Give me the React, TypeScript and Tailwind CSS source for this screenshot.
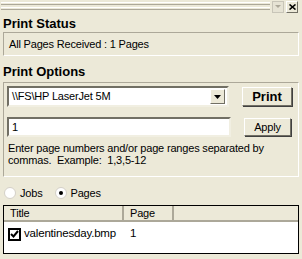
export default function App() {
  return (
    <div className="w-[302px] h-[259px] overflow-hidden bg-[#ece9d8] text-[11px] tracking-[-0.18px] text-black font-['Liberation_Sans',Arial,sans-serif] leading-none">
      {/* title / gripper bar */}
      <div className="flex items-start h-[14px] pl-[1px] pr-[4px] pt-[1px]">
        <div className="flex-1 flex flex-col gap-[2px] pt-[1px] pr-[2px]">
          <div className="h-[3px] border-t border-b border-t-white border-b-[#aca899]" />
          <div className="h-[3px] border-t border-b border-t-white border-b-[#aca899]" />
        </div>
        <div className="w-[12px] h-[12px] mr-[2px] flex items-center justify-center border border-[#c8c5b8] bg-[#e6e3d4]">
          <svg width="6" height="4" viewBox="0 0 6 4"><path d="M0 0h6L3 3z" fill="#aca899" /></svg>
        </div>
        <div className="w-[12px] h-[12px] flex items-center justify-center border border-t-white border-l-white border-r-[#716f64] border-b-[#716f64] bg-[#ece9d8]">
          <svg width="7" height="6" viewBox="0 0 7 6"><path d="M0.5 0.5l6 5M6.5 0.5l-6 5" stroke="#000" strokeWidth="1.6" /></svg>
        </div>
      </div>

      <div className="px-[3px] pt-[3px] h-[18px] text-[13px] tracking-normal font-bold">Print Status</div>
      <div className="mx-[3px] h-[24px] flex items-center px-[5px] border border-t-[#aca899] border-l-[#aca899] border-b-white border-r-white">
        All Pages Received : 1 Pages
      </div>

      <div className="px-[3px] pt-[9px] h-[26px] text-[13px] tracking-normal font-bold">Print Options</div>
      <div className="mx-[3px] h-[95px] border border-t-[#aca899] border-l-[#aca899] border-b-white border-r-white px-[3px] pt-[3px]">
        <div className="flex items-center h-[21px]">
          <div className="w-[222px] h-[21px] flex items-center bg-white border-2 border-t-[#716f64] border-l-[#716f64] border-b-[#f1efe2] border-r-[#f1efe2]">
            <span className="flex-1 pl-[3px]">\\FS\HP LaserJet 5M</span>
            <div className="w-[15px] h-[15px] mr-[2px] flex items-center justify-center bg-[#ece9d8] border border-t-white border-l-white border-r-[#716f64] border-b-[#716f64]">
              <svg width="7" height="4" viewBox="0 0 7 4"><path d="M0 0h7L3.5 4z" fill="#000" /></svg>
            </div>
          </div>
          <button className="ml-[13px] w-[50px] h-[19px] text-[13px] tracking-normal font-bold bg-[#ece9d8] border border-t-white border-l-white border-r-[#716f64] border-b-[#716f64] shadow-[1px_1px_0_#404040]">
            Print
          </button>
        </div>
        <div className="flex items-center h-[20px] mt-[10px]">
          <div className="w-[224px] h-[20px] flex items-center pl-[3px] bg-white border-2 border-t-[#716f64] border-l-[#716f64] border-b-[#f1efe2] border-r-[#f1efe2]">
            1
          </div>
          <button className="ml-[13px] w-[47px] h-[18px] bg-[#ece9d8] border border-t-white border-l-white border-r-[#716f64] border-b-[#716f64] shadow-[1px_1px_0_#404040]">
            Apply
          </button>
        </div>
        <p className="mt-[5px] pl-[1px] leading-[12px]">
          Enter page numbers and/or page ranges separated by commas.&nbsp; Example:&nbsp; 1,3,5-12
        </p>
      </div>

      <div className="flex items-center h-[14px] mt-[9px] px-[3px] gap-[4px]">
        <div className="ml-[1px] w-[12px] h-[12px] rounded-full bg-white border border-[#d4d0c8]" />
        <span>Jobs</span>
        <div className="ml-[8px] w-[12px] h-[12px] rounded-full bg-white border border-[#d4d0c8] flex items-center justify-center">
          <div className="w-[4px] h-[4px] rounded-full bg-black" />
        </div>
        <span>Pages</span>
      </div>

      <div className="mx-[3px] mt-[5px] h-[49px] border border-black bg-white">
        <div className="flex h-[16px] bg-[#ece9d8] border-b-2 border-b-[#aca899]">
          <div className="w-[120px] pl-[6px] flex items-center border-r-2 border-r-[#aca899]">Title</div>
          <div className="w-[50px] pl-[6px] flex items-center border-r-2 border-r-[#aca899]">Page</div>
        </div>
        <div className="flex items-center h-[20px] mt-[2px] pl-[4px]">
          <div className="w-[13px] h-[13px] border-2 border-black flex items-center justify-center bg-white">
            <svg width="9" height="8" viewBox="0 0 9 8"><path d="M1 4l2.5 2.5L8 1" stroke="#000" strokeWidth="2" fill="none" /></svg>
          </div>
          <span className="ml-[3px] w-[103px] text-[11.5px]">valentinesday.bmp</span>
          <span className="ml-[3px] text-[11.5px]">1</span>
        </div>
      </div>
    </div>
  )
}
